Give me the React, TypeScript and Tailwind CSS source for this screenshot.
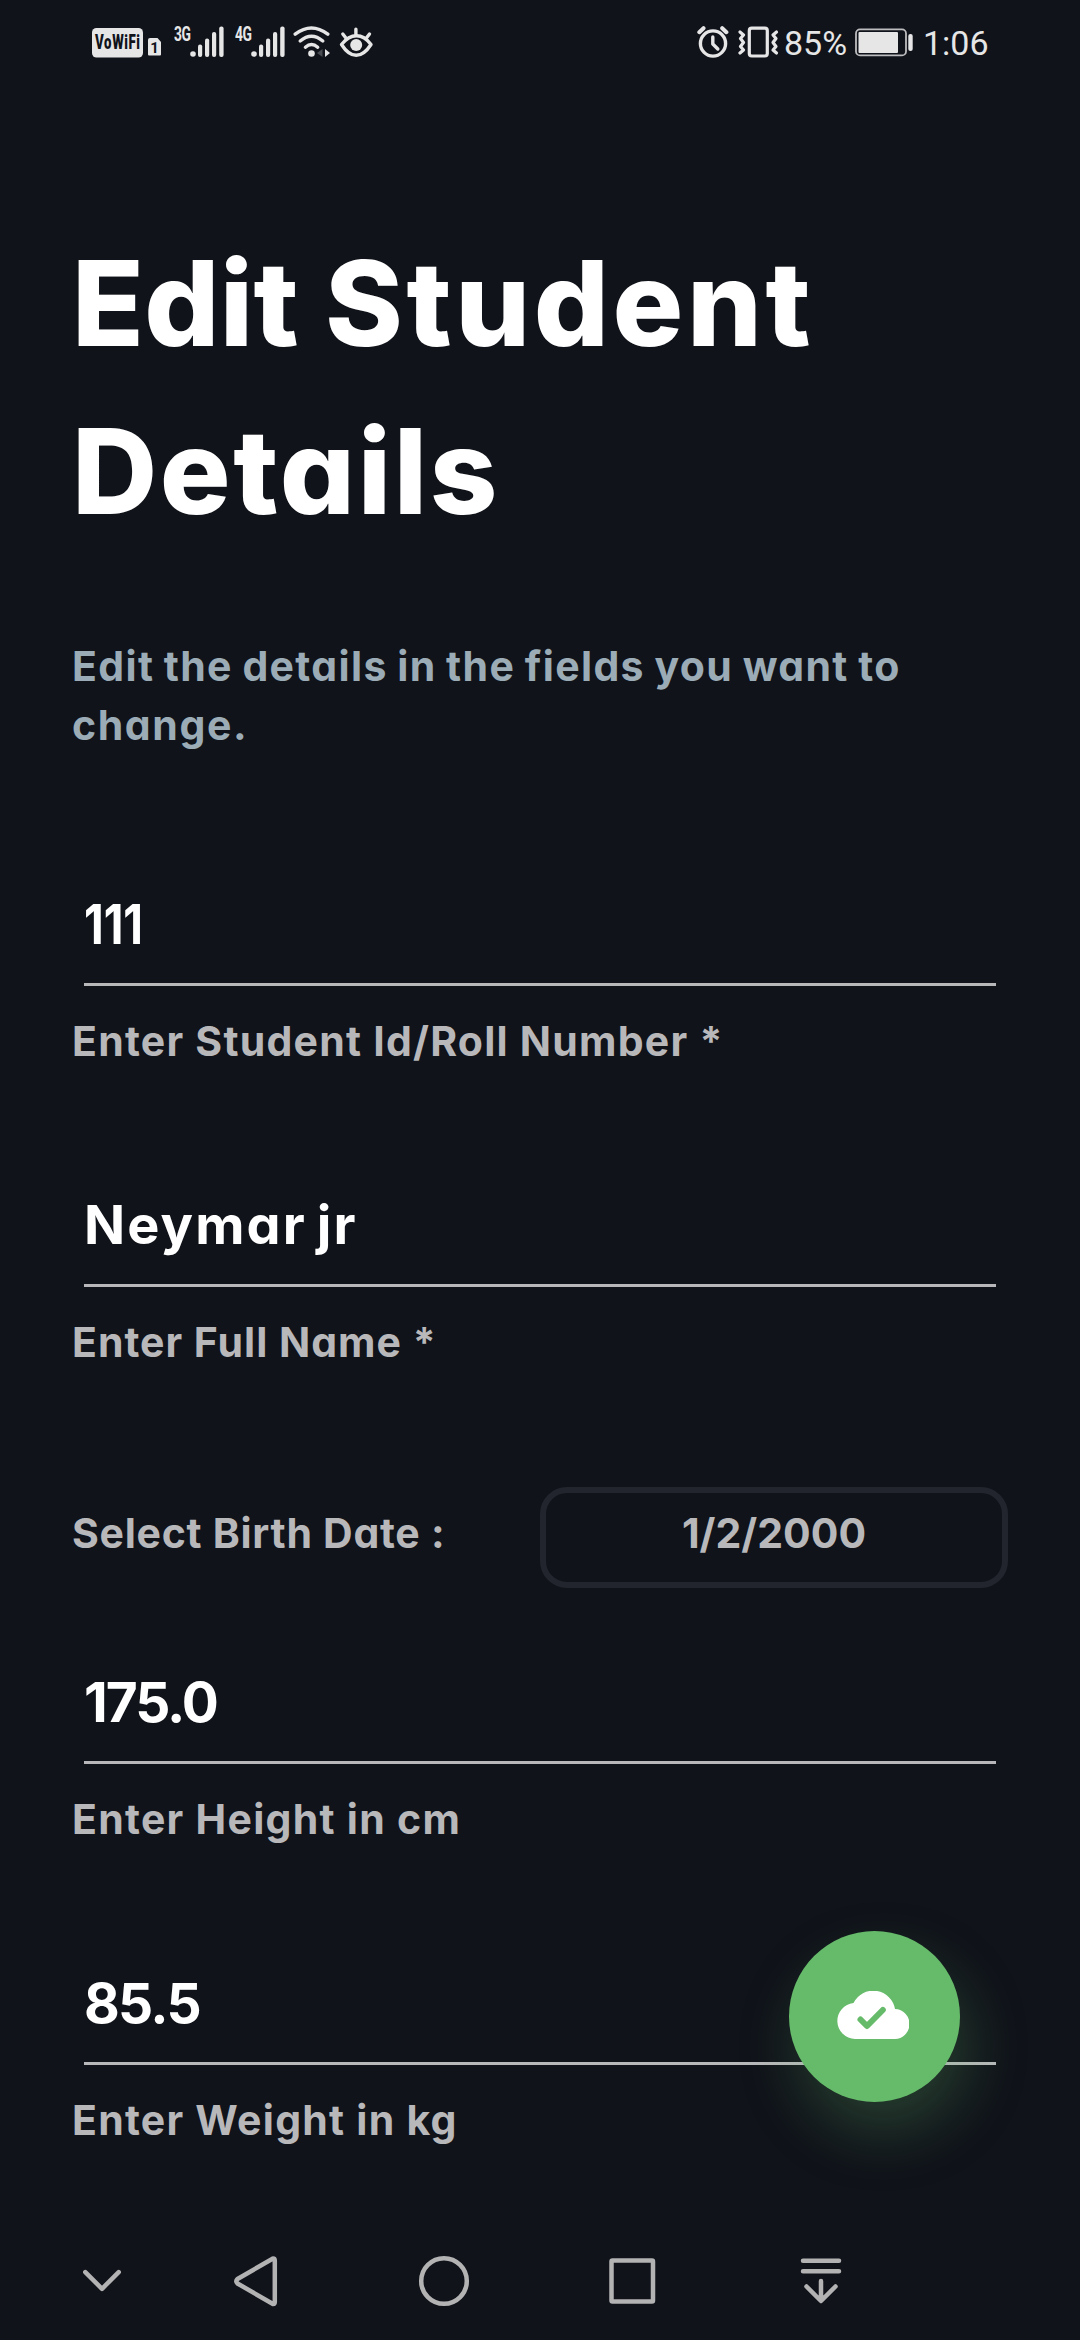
type FieldProps = {
  value: string;
  label: string;
  valueClass: string;
  labelClass: string;
};

function Field({ value, label, valueClass, labelClass }: FieldProps) {
  return (
    <div className="flex flex-col">
      <div className="mx-3 flex h-[104px] flex-col items-start border-b-[3px] border-[#b8b8ba]">
        <span className={`whitespace-nowrap leading-[84px] text-white ${valueClass}`}>{value}</span>
      </div>
      <span className={`mt-[26px] whitespace-nowrap text-[41px] leading-[59px] text-[#b8b8ba] ${labelClass}`}>{label}</span>
    </div>
  );
}

function Signal({ label }: { label: string }) {
  return (
    <svg className="-mt-2 h-11 w-[51px]" viewBox="0 -8 51 44" fill="#e6e6e7">
      <text x="0" y="16" transform="scale(0.71 1)" fontFamily="Roboto" fontWeight="700" fontSize="19.5" textLength="24">
        {label}
      </text>
      <circle cx="19" cy="29" r="2.8" />
      <rect x="24" y="19.5" width="4.2" height="12.5" rx="2" />
      <rect x="31" y="13.5" width="4.2" height="18.5" rx="2" />
      <rect x="38" y="7" width="4.2" height="25" rx="2" />
      <rect x="45.2" y="1.5" width="4.4" height="30.5" rx="2" />
    </svg>
  );
}

function StatusBar() {
  return (
    <div className="flex h-[84px] items-start justify-between pl-[92px] pr-[92px] pt-[25px]">
      <div className="flex h-9 items-start">
        <svg className="h-9 w-[70px]" viewBox="0 0 70 36" fill="#e6e6e7">
          <rect x="0" y="3" width="51" height="29.5" rx="4.5" />
          <text x="4.5" y="24.5" transform="scale(0.68 1)" fontFamily="Roboto" fontWeight="900" fontSize="19.5" textLength="66" fill="#10131a">
            VoWiFi
          </text>
          <path d="M58 13h7.5l3.5 4v12.5q0 1-1 1H57q-1 0-1-1V15q0-2 2-2z" />
          <text x="58.2" y="27.6" fontFamily="Roboto" fontWeight="700" fontSize="15" fill="#10131a">
            1
          </text>
        </svg>
        <div className="ml-[12px] flex gap-[10px]">
          <Signal label="3G" />
          <Signal label="4G" />
        </div>
        <svg className="ml-[7px] h-9 w-[38px]" viewBox="0 0 38 36" fill="none" stroke="#e6e6e7" strokeWidth="3.4" strokeLinecap="round">
          <path d="M2.2 9.2q16.2-12.4 32.6 0" />
          <path d="M7.2 16q11.3-9.4 22.6 0" />
          <path d="M12.4 22.2q6.1-5.2 12.3 0" />
          <circle cx="18.5" cy="28.5" r="3.3" fill="#e6e6e7" stroke="none" />
          <path d="M29.5 24v8l-5.5-4z" fill="#4a4c53" stroke="none" />
          <path d="M32 24v8l5-4z" fill="#e6e6e7" stroke="none" />
        </svg>
        <svg className="ml-[8px] h-9 w-9" viewBox="0 0 36 36" fill="none" stroke="#e6e6e7" strokeWidth="3.4" strokeLinecap="round" strokeLinejoin="round">
          <path d="M2.5 19.5Q9.5 10.800 17.5 10.800T32 19.5Q25 30.3 17.2 30.3T2.5 19.5z" />
          <circle cx="17.2" cy="20" r="6" fill="#e6e6e7" stroke="none" />
          <path d="M16.9 4.3v6M3.8 9l3.5 4.5M30.5 9L27 13.5" />
        </svg>
      </div>
      <div className="flex h-9 items-start font-normal text-[#e6e6e7]">
        <svg className="h-9 w-[32px]" viewBox="0 0 32 36" fill="none" stroke="#e6e6e7" strokeWidth="3.4" strokeLinecap="round" strokeLinejoin="round">
          <circle cx="16" cy="18.5" r="12.6" />
          <path d="M15.8 12v7l5 5" />
          <path d="M2.3 7.2l4.2-4M29.4 7.2l-4.2-4" strokeWidth="4" />
        </svg>
        <svg className="ml-[9px] h-9 w-[42px]" viewBox="0 0 42 36" fill="none" stroke="#e6e6e7" strokeWidth="3.2" strokeLinecap="round" strokeLinejoin="round">
          <rect x="11.3" y="3.2" width="18" height="27.8" rx="2.5" />
          <path d="M2 7l3.5 3-3 3.5 3 4-3 4 3 3.5-3.5 3" />
          <path d="M38.5 7l-3.5 3 3 3.5-3 4 3 4-3 3.5 3.5 3" />
        </svg>
        <span className="ml-[4px] w-[67px] whitespace-nowrap font-[Roboto] text-[34px] leading-9">85%</span>
        <svg className="ml-[4px] h-9 w-[59px]" viewBox="0 0 59 36" fill="none" stroke="#bdbdbf">
          <rect x="1" y="4.4" width="50" height="26" rx="4" strokeWidth="1.8" />
          <rect x="3.5" y="7" width="39.5" height="21" rx="1" fill="#e6e6e7" stroke="none" />
          <rect x="53.3" y="9" width="4.4" height="17" rx="2" fill="#e6e6e7" stroke="none" />
        </svg>
        <span className="ml-[9px] w-[65px] whitespace-nowrap font-[Roboto] text-[34px] leading-9">1:06</span>
      </div>
    </div>
  );
}

function NavBar() {
  return (
    <div className="mt-auto flex h-[118px] items-center">
      <svg
        className="h-[118px] w-full"
        viewBox="0 2222 1080 118"
        fill="none"
        stroke="#b3b3b4"
        strokeWidth="4.5"
        strokeLinecap="round"
        strokeLinejoin="round"
      >
        <path d="M85.3 2272.2l16.7 16.6 16.7-16.6" />
        <path d="M273 2258.5q1.8 0 1.8 2v41.5q0 2-1.8 2L237.5 2283.5q-2.5-2.2 0-4.5z" />
        <circle cx="444" cy="2281" r="22.8" />
        <rect x="611.5" y="2260.5" width="41.5" height="41" rx="1" />
        <path d="M803 2260.8h36M803 2271.3h36M821 2281v19M806.5 2286.5l14.500 14.5 14.5-14.5" />
      </svg>
    </div>
  );
}

export default function App() {
  return (
    <div
      className="relative flex h-[2340px] w-[1080px] flex-col overflow-hidden bg-[#10131a] font-bold"
      style={{ fontFamily: 'Inter, "Open Sans", sans-serif', fontFeatureSettings: '"cv11"' }}
    >
      <StatusBar />
      <main className="flex flex-col px-[72px] pt-[135px]">
        <h1 className="whitespace-nowrap text-[118px] font-extrabold leading-[168px] text-white">
          <span className="tracking-[0.3px]">Edit </span>
          <span className="tracking-[3.6px]">Student</span>
          <br />
          <span className="tracking-[2.6px]">Details</span>
        </h1>
        <p className="mt-[82px] whitespace-nowrap text-[41px] leading-[59px] text-[#9bacb6]">
          <span className="block tracking-[1.34px] [word-spacing:-1.5px]">Edit the details in the fields you want to</span>
          <span className="block tracking-[1.6px]">change.</span>
        </p>

        <div className="mt-[127px] flex flex-col gap-[112px]">
          <Field
            value="111"
            label="Enter Student Id/Roll Number *"
            valueClass="origin-left scale-x-[0.83] text-[55px]"
            labelClass="tracking-[1.24px]"
          />
          <Field value="Neymar jr" label="Enter Full Name *" valueClass="text-[54px] tracking-[2.1px] [word-spacing:-5px]" labelClass="tracking-[1px]" />
        </div>

        <div className="mt-[115px] flex h-[101px] justify-between">
          <span className="mt-[17px] whitespace-nowrap text-[41px] leading-[59px] tracking-[0.72px] text-[#b8b8ba]">Select Birth Date :</span>
          <div className="flex h-[101px] w-[468px] justify-center rounded-[27px] border-[6px] border-[#22252d] pt-[11px]">
            <span className="text-[41px] leading-[59px] text-[#b8b8ba]">1/2/2000</span>
          </div>
        </div>

        <div className="mt-[72px] flex flex-col gap-[112px]">
          <Field value="175.0" label="Enter Height in cm" valueClass="text-[55px] tracking-[-2px]" labelClass="tracking-[1.28px]" />
          <Field value="85.5" label="Enter Weight in kg" valueClass="text-[55px] tracking-[-1.7px]" labelClass="tracking-[1.25px]" />
        </div>
      </main>

      <button
        type="button"
        aria-label="Save"
        className="absolute left-[789px] top-[1931px] flex size-[171px] items-center justify-center rounded-full bg-[#66bb6a] shadow-[9px_30px_60px_rgba(102,187,106,0.25)]"
      >
        <svg className="mb-[3px] mr-[3px] w-[72px]" viewBox="0 0 72 48">
          <path d="M18 48A18 18 0 0 1 16.5 12.1A22 22 0 0 1 58 18A15 15 0 0 1 57 48z" fill="#fff" />
          <path d="M23.5 28.5l6.5 6.5 15.8-16" fill="none" stroke="#66bb6a" strokeWidth="6" strokeLinecap="round" strokeLinejoin="round" />
        </svg>
      </button>

      <NavBar />
    </div>
  );
}
